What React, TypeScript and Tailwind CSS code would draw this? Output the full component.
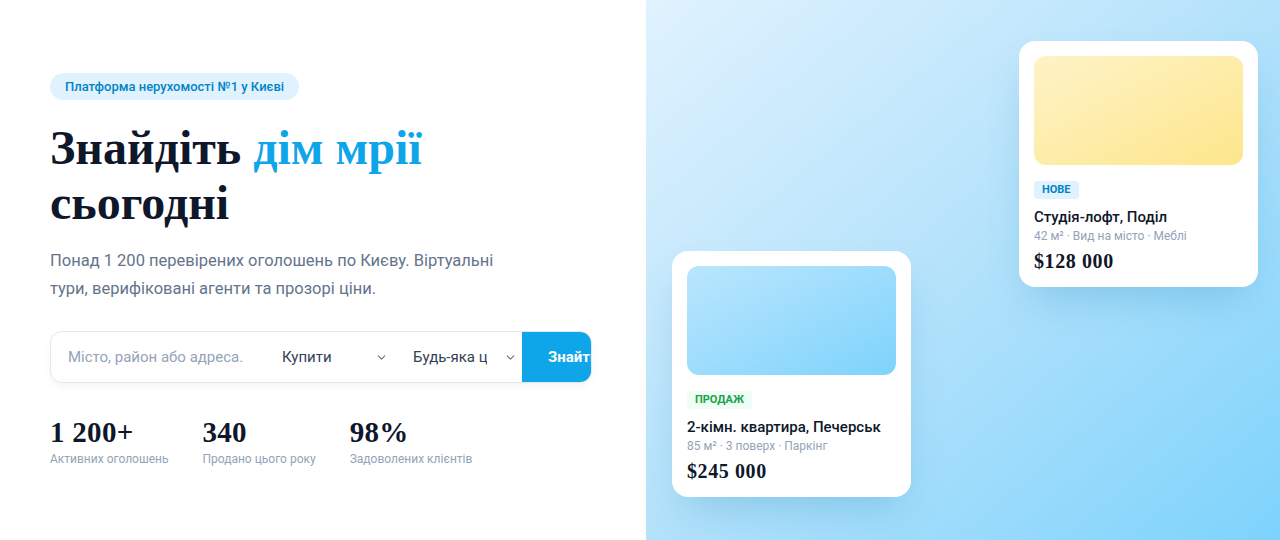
import { ChevronDown } from "lucide-react";

const sans = "font-['Roboto','Inter',sans-serif]";
const serif = "font-['Liberation_Serif','DejaVu_Serif',serif]";

function ListingCard({
  tone,
  tag,
  tagClass,
  title,
  meta,
  price,
  className,
}: {
  tone: string;
  tag: string;
  tagClass: string;
  title: string;
  meta: string;
  price: string;
  className: string;
}) {
  return (
    <div
      className={`absolute w-[239px] rounded-2xl bg-white px-[15px] pb-[14px] pt-[15px] shadow-[0_20px_40px_-12px_rgba(14,116,170,0.25)] ${className}`}
    >
      <div className={`h-[109px] rounded-xl ${tone}`} />
      <span
        className={`mt-4 inline-block rounded px-[8px] py-[3px] text-[11px] font-bold leading-[12px] ${tagClass}`}
      >
        {tag}
      </span>
      <div className="mt-[7px] text-[15px] font-medium leading-5 text-[#0f172a]">{title}</div>
      <div className="mt-[1px] text-[12px] leading-4 text-[#94a3b8]">{meta}</div>
      <div className={`mt-[5px] text-[20px] font-bold leading-6 tracking-[0.03em] text-[#0f172a] ${serif}`}>
        {price}
      </div>
    </div>
  );
}

export default function App() {
  const stats = [
    { value: "1 200+", label: "Активних оголошень" },
    { value: "340", label: "Продано цього року" },
    { value: "98%", label: "Задоволених клієнтів" },
  ];

  return (
    <div className={`flex h-[540px] w-full overflow-hidden bg-white ${sans}`}>
      <div className="w-[646px] shrink-0 pl-[50px] pt-[73px]">
        <span className="inline-block rounded-full bg-[#e0f2fe] px-[15px] py-[5px] text-[13px] font-medium leading-[17px] text-[#0284c7]">
          Платформа нерухомості №1 у Києві
        </span>

        <h1 className={`mt-5 text-[48px] font-bold leading-[55px] text-[#0f172a] ${serif}`}>
          Знайдіть <span className="text-[#0ea5e9]">дім мрії</span>
          <br />
          сьогодні
        </h1>

        <p className="mt-[17px] w-[470px] text-[16.5px] leading-[28px] text-[#64748b]">
          Понад 1 200 перевірених оголошень по Києву. Віртуальні тури, верифіковані агенти та прозорі ціни.
        </p>

        <div className="mt-[28px] flex h-[52px] w-[542px] overflow-hidden rounded-xl border border-[#e2e8f0] bg-white shadow-[0_4px_12px_-4px_rgba(15,23,42,0.08)]">
          <div className="flex w-[213px] shrink-0 items-center pl-[17px] text-[15px] text-[#94a3b8]">
            Місто, район або адреса.
          </div>
          <div className="flex w-[131px] shrink-0 items-center justify-between pl-[18px] pr-[7px] text-[15px] text-[#334155]">
            <span>Купити</span>
            <ChevronDown size={13} strokeWidth={2} className="text-[#64748b]" />
          </div>
          <div className="flex w-[127px] shrink-0 items-center justify-between pl-[18px] pr-[5px] text-[15px] text-[#334155]">
            <span className="w-[74px] overflow-hidden whitespace-nowrap">Будь-яка ціна</span>
            <ChevronDown size={13} strokeWidth={2} className="text-[#64748b]" />
          </div>
          <button className="flex w-[72px] shrink-0 items-center overflow-hidden whitespace-nowrap rounded-r-xl bg-[#0ea5e9] pl-[26px] text-[15px] font-bold text-white">
            Знайти
          </button>
        </div>

        <div className="mt-8 flex gap-[34px]">
          {stats.map((s) => (
            <div key={s.label}>
              <div className={`text-[29px] font-bold leading-[34px] tracking-[0.01em] text-[#0f172a] ${serif}`}>
                {s.value}
              </div>
              <div className="mt-[2px] text-[12px] leading-4 text-[#94a3b8]">{s.label}</div>
            </div>
          ))}
        </div>
      </div>

      <div className="relative flex-1 bg-gradient-to-br from-[#e0f2fe] via-[#b3e2fb] to-[#7dd3fc]">
        <ListingCard
          className="left-[26px] top-[251px]"
          tone="bg-gradient-to-br from-[#bae6fd] to-[#7dd3fc]"
          tag="ПРОДАЖ"
          tagClass="bg-[#f0fdf4] text-[#16a34a]"
          title="2-кімн. квартира, Печерськ"
          meta="85 м² · 3 поверх · Паркінг"
          price="$245 000"
        />
        <ListingCard
          className="left-[373px] top-[41px]"
          tone="bg-gradient-to-br from-[#fef3c7] to-[#fde68a]"
          tag="НОВЕ"
          tagClass="bg-[#e0f2fe] text-[#0284c7]"
          title="Студія-лофт, Поділ"
          meta="42 м² · Вид на місто · Меблі"
          price="$128 000"
        />
      </div>
    </div>
  );
}
